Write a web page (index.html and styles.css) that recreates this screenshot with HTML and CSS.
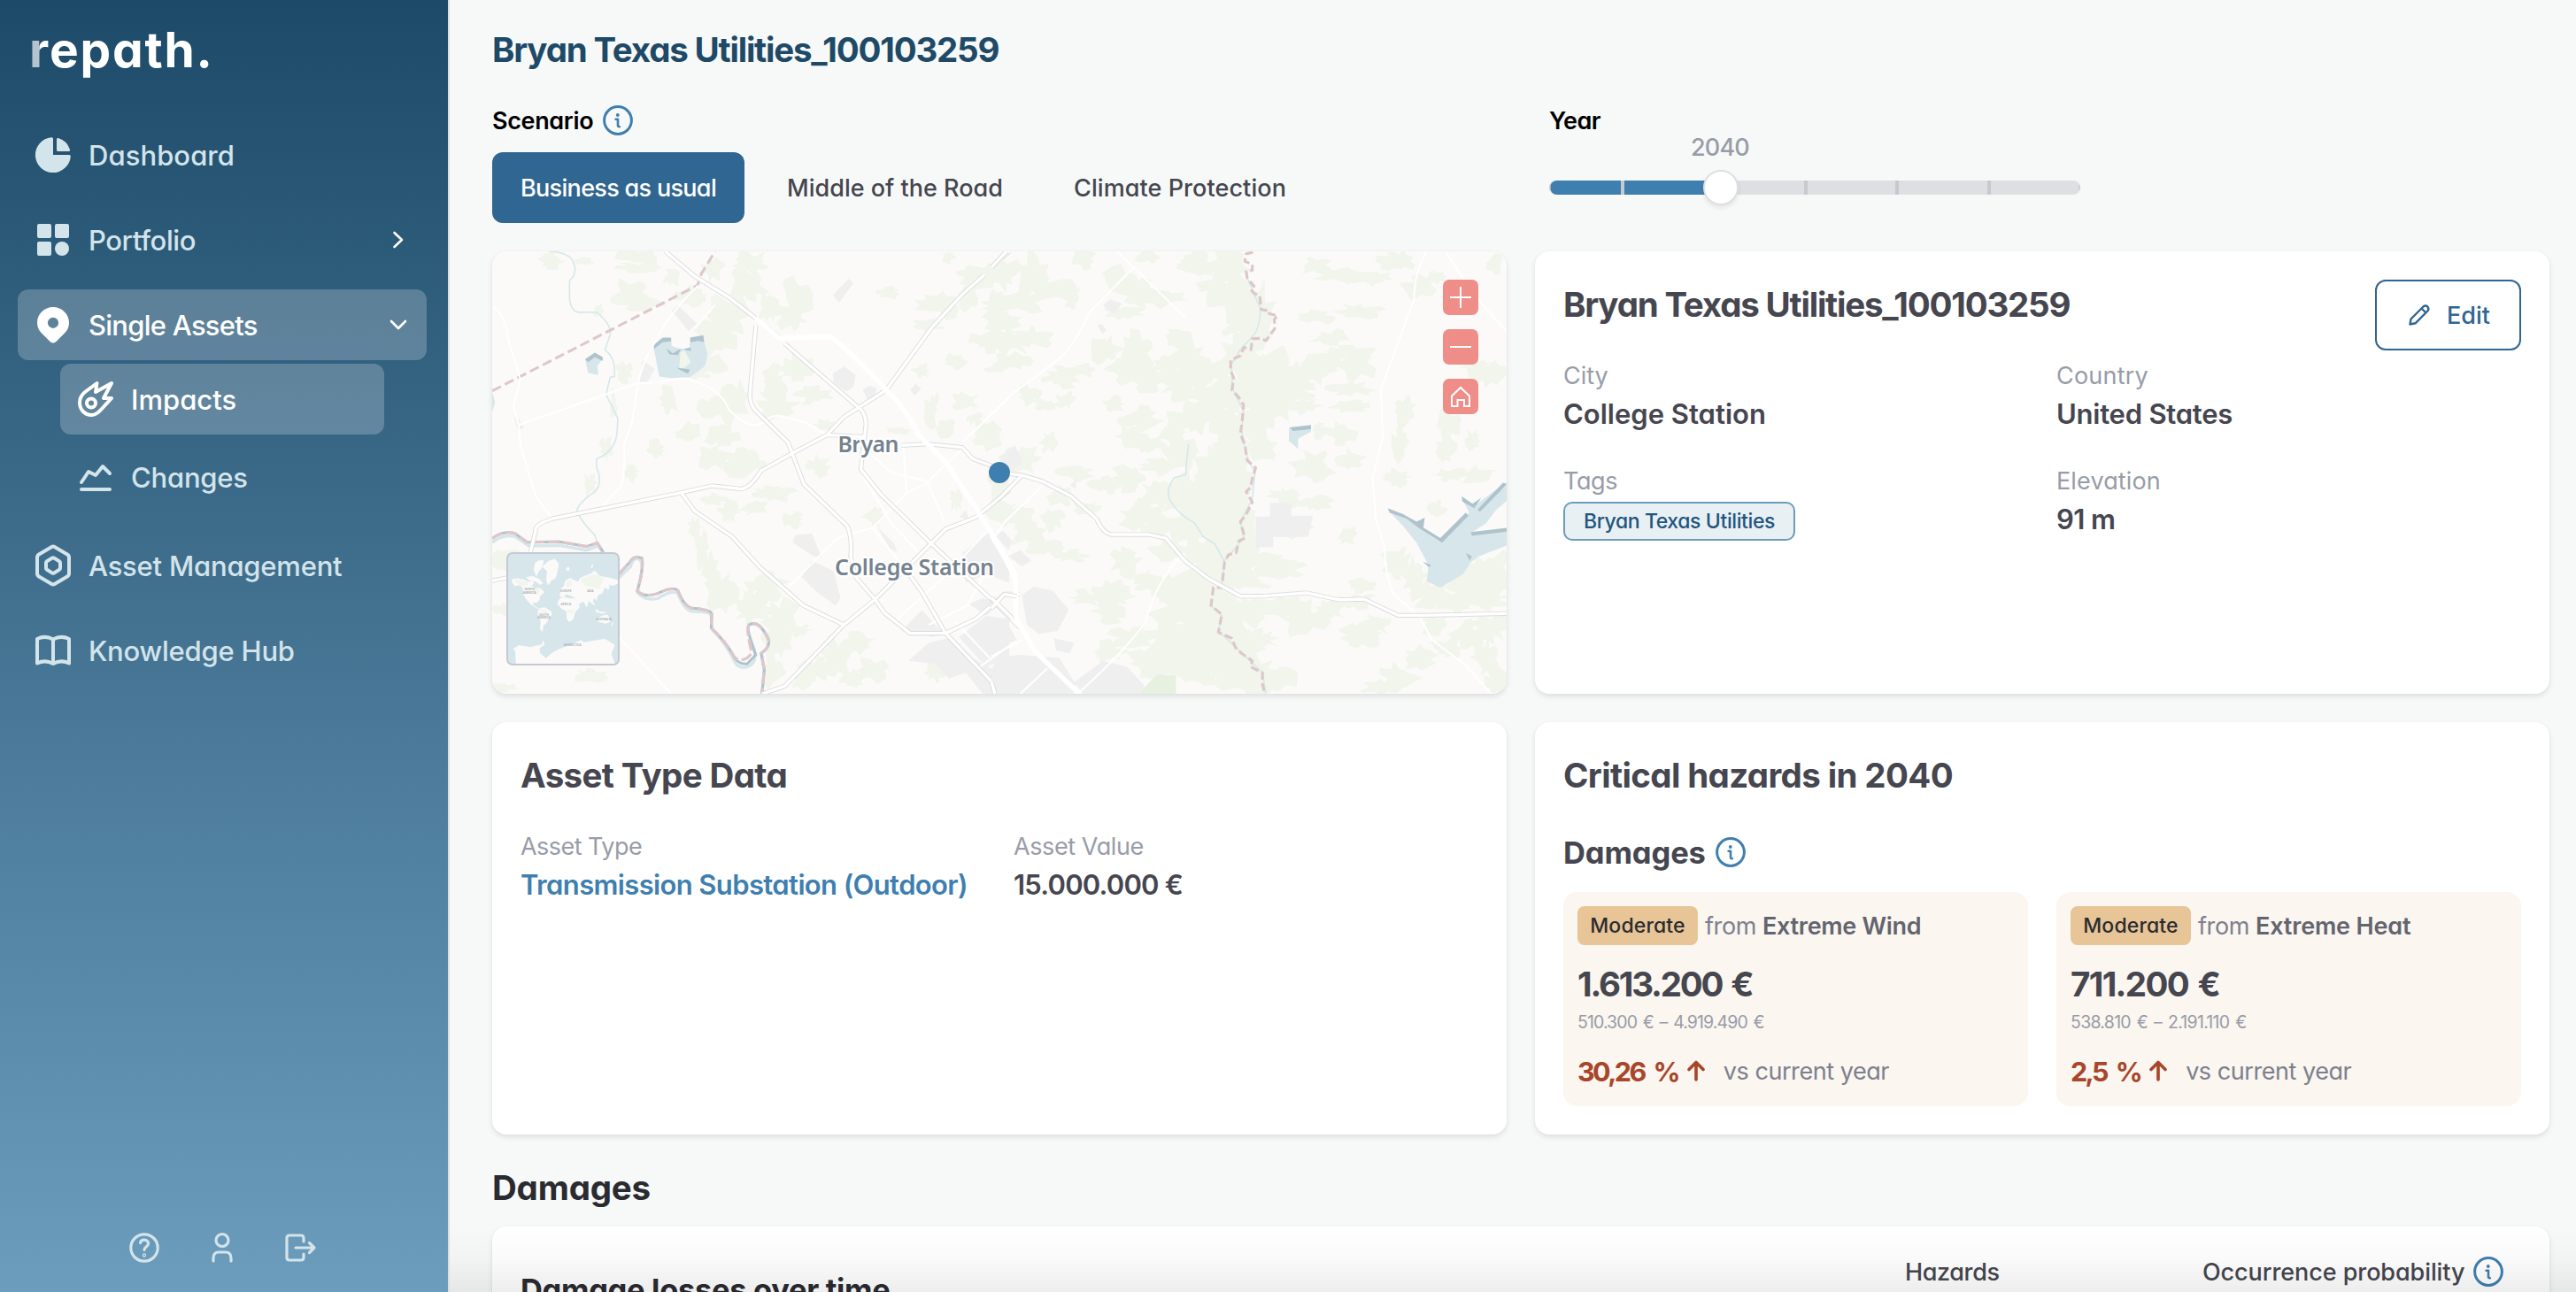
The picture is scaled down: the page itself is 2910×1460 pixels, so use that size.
FILE: index.html
```html
<!DOCTYPE html>
<html lang="en">
<head>
<meta charset="utf-8">
<title>repath.</title>
<link rel="stylesheet" href="styles.css">
</head>
<body>
<svg class="defs" width="0" height="0">
  <symbol id="info" viewBox="0 0 34 34"><circle cx="17" cy="17" r="15.4" fill="none" stroke="currentColor" stroke-width="3"/><circle cx="16.8" cy="11" r="1.9" fill="currentColor"/><path d="M14.6 15.8h2.4v7q0 1.4 1.8 1.4" fill="none" stroke="currentColor" stroke-width="2.6" stroke-linecap="round" stroke-linejoin="round"/></symbol>
  <symbol id="up" viewBox="0 0 22 24"><path d="M11 22V3M3 10.5L11 2.5L19 10.5" fill="none" stroke="currentColor" stroke-width="3.6" stroke-linecap="round" stroke-linejoin="round"/></symbol>
</svg>
<div class="app">
  <aside class="sidebar">
    <div class="logo"><span class="logo-r">r</span>epath.</div>
    <nav class="nav">
      <a class="item"><svg class="ic" viewBox="0 0 40 40"><path fill="currentColor" d="M18 .2Q20 0 20 2V20H38Q40 20 39.8 22A20 20 0 1 1 18 .2Z"/><path fill="currentColor" d="M24 2.5Q24 .6 25.8 1A20 20 0 0 1 39 14Q39.6 16 37.8 16H25.5Q24 16 24 14.5Z"/></svg><span class="label dashboard">Dashboard</span></a>
      <a class="item"><svg class="ic" viewBox="0 0 40 40" fill="currentColor"><rect x="2" y="2" width="16" height="16" rx="2"/><rect x="22" y="2" width="16" height="16" rx="2"/><rect x="2" y="22" width="16" height="16" rx="2"/><circle cx="30" cy="30" r="8"/></svg><span class="label portfolio">Portfolio</span><svg class="chev" viewBox="0 0 20 20"><path d="M5.500 2L14 10L5.500 18"/></svg></a>
      <a class="item active"><svg class="ic" viewBox="0 0 40 40"><path fill="currentColor" fill-rule="evenodd" d="M20 0C30 0 38 8 38 17.500C38 23 35.800 27 32.500 30L23.200 39.200Q20 42 16.800 39.200L7.500 30C4.200 27 2 23 2 17.500C2 8 10 0 20 0ZM20 11.700A6.100 6.100 0 1 0 20 23.900A6.100 6.100 0 1 0 20 11.700Z"/></svg><span class="label single">Single Assets</span><svg class="chev" viewBox="0 0 20 20"><path d="M2 6L10 14L18 6"/></svg></a>
      <a class="item active impacts-row"><svg class="ic" viewBox="0 0 40 40"><path class="ln" d="M2 24C2 18 5 14.500 8 12L21.500 2L20 12L38 2L29 19H38L26 32C22.500 36 19.500 38 15.500 38C8 38 2 32 2 24Z"/><circle class="ln" cx="15" cy="24.500" r="5"/></svg><span class="label impacts">Impacts</span></a>
      <a class="item changes-row"><svg class="ic" viewBox="0 0 40 40"><path class="ln" d="M4 26L12 14L20 18L28 8L36 16M4 34H36"/></svg><span class="label changes">Changes</span></a>
      <a class="item assets-row"><svg class="ic" viewBox="0 0 40 40"><path class="ln" d="M18 -.8Q20 -2 22 -.8L36 7.500Q38 8.700 38 11V29Q38 31.300 36 32.500L22 40.800Q20 42 18 40.800L4 32.500Q2 31.300 2 29V11Q2 8.700 4 7.500Z"/><path class="ln" d="M19 11.500Q20 10.900 21 11.500L27 15.200Q28 15.800 28 17V23Q28 24.200 27 24.800L21 28.500Q20 29.100 19 28.500L13 24.800Q12 24.200 12 23V17Q12 15.800 13 15.200Z"/></svg><span class="label assets">Asset Management</span></a>
      <a class="item"><svg class="ic" viewBox="0 0 40 40"><path class="ln" d="M20 7.500V35M20 7.500Q11 2.500 2 7V34.500Q11 30 20 35Q29 30 38 34.500V7Q29 2.500 20 7.500Z"/></svg><span class="label knowledge">Knowledge Hub</span></a>
    </nav>
    <div class="foot">
      <svg width="36" height="36" viewBox="0 0 36 36"><circle cx="18" cy="18" r="15.200"/><path d="M13.500 12.500C14 9.800 16 9 18.200 9.200C21 9.400 22.800 11.200 22.500 13.800C22 16.800 18.200 16.800 18 20.500"/><circle cx="18" cy="26.500" r=".6"/></svg>
      <svg width="36" height="36" viewBox="0 0 36 36"><circle cx="18" cy="9.500" r="7"/><path d="M8 33V30Q8 23 14 23H22Q28 23 28 30V33"/></svg>
      <svg width="36" height="36" viewBox="0 0 36 36"><path d="M22 11V7Q22 4 19 4H6Q3 4 3 7V29Q3 32 6 32H19Q22 32 22 29V25M13 18H34M28.500 12.500L34 18L28.500 23.500"/></svg>
    </div>
  </aside>

  <main class="main">
    <h1 class="title">Bryan Texas Utilities_100103259</h1>
    <section class="controls">
      <div class="scenario">
        <div class="ctl-label"><span class="scn">Scenario</span><svg class="info"><use href="#info"/></svg></div>
        <div class="tabs"><button class="tab on">Business as usual</button><button class="tab mid">Middle of the Road</button><button class="tab clim">Climate Protection</button></div>
      </div>
      <div class="year">
        <div class="ctl-label yr">Year</div>
        <div class="track"><div class="fill"></div><i></i><i></i><i></i><i></i><i></i><i></i><i></i><div class="thumb"></div><div class="val">2040</div></div>
      </div>
    </section>

    <section class="cards">
      <div class="card map">
        <svg class="mapsvg" viewBox="0 0 1146 500">
          <g transform="translate(-16 -14) scale(.3827 .3381)">
            <g id="woods-west" class="wood"></g>
            <path class="urban" d="M572 240L590 222L645 282L622 308ZM1047 188L1094 133L1108 148L1066 213ZM1047 452L1080 425L1115 455L1108 495L1085 510L1050 480ZM1135 505L1155 490L1178 500L1172 522L1150 538ZM1275 505L1292 484L1308 500L1290 524ZM485 405L522 435L500 478L474 482ZM106 595L120 600L136 630L118 640ZM1180 965L1230 1020L1236 1047L1215 1035ZM935 990L985 985L1015 1065L990 1060L930 1015ZM955 1130L985 1075L1050 1110L1070 1200L1055 1225L1000 1180ZM1250 1310L1310 1240L1350 1290L1380 1320L1340 1330ZM1270 1410L1330 1350L1400 1330L1460 1400L1520 1440L1568 1480V1521H1490L1440 1450L1390 1470L1350 1420ZM1420 1330L1500 1260L1568 1270V1400L1500 1430ZM1450 1220L1490 1200L1540 1220L1500 1260ZM1430 1050L1510 980L1540 1020L1568 1080V1150L1500 1120L1440 1150ZM1420 930L1440 905L1450 940Z"/>
            <path class="water" d="M518 360L535 340L570 335L572 358L600 368L625 362V335L662 325L678 385L670 425L625 462L575 466L535 460ZM316 402L345 380L368 400L352 425L355 455L325 448ZM42 512L50 545L42 578Z"/>
            <path class="deep" d="M518 355L545 330H570V342L545 345L520 367ZM556 366L575 382L600 366L590 388L565 386ZM626 330L665 322L668 345L650 340L628 345ZM606 370L628 362V375ZM316 402L345 380L368 395V408L345 395L325 412ZM586 430L625 436L620 450L600 440Z"/>
            <path class="wood" d="M597 380L610 372L622 400L628 412L610 430L594 432Z"/>
            <path class="stream" d="M210 41Q260 45 275 65Q300 110 270 140V200Q275 245 300 245H350Q395 285 390 320L375 370Q405 400 403 440V460L390 462L378 520L413 600L410 650Q405 710 350 735V765Q370 815 345 845Q300 880 292 905Q300 940 345 990L352 1015"/>
            <path class="river" d="M42 1014Q75 985 110 995L150 1026L240 1024L320 1040L355 1026L375 1060M416 1132L450 1095Q462 1055 480 1075Q490 1100 470 1180Q490 1210 530 1202Q575 1170 590 1185Q612 1250 640 1245Q690 1245 688 1262L692 1306Q730 1350 752 1400Q765 1440 795 1430Q825 1420 815 1370Q790 1300 800 1290Q830 1270 858 1340Q862 1365 836 1385L845 1440L838 1521"/>
            <path class="shade" d="M42 1001Q75 972 110 985L145 1014L240 1012L320 1028L352 1016L370 1047M416 1120L448 1080Q462 1055 484 1067Q490 1100 470 1176Q490 1200 530 1185Q575 1160 590 1175Q612 1238 640 1235Q690 1240 690 1255L688 1300Q730 1345 750 1385Q765 1425 795 1420L820 1390Q790 1300 800 1290Q830 1270 858 1340Q862 1365 836 1385L845 1440L838 1521"/>
            <path class="bound2" d="M42 1001Q75 972 110 985L145 1014L240 1012L320 1028L352 1016L370 1047M416 1120L448 1080Q462 1055 484 1067Q490 1100 470 1176Q490 1200 530 1185Q575 1160 590 1175Q612 1238 640 1235Q690 1240 690 1255L688 1300Q730 1345 750 1385Q765 1420 795 1400L808 1385Q790 1300 800 1290Q830 1270 858 1340Q862 1365 836 1385L845 1440L838 1521"/>
            <path class="bound" d="M42 508L648 155L660 115L700 41"/>
            <path class="minor" d="M42 225Q80 245 90 340L125 470L105 560L120 622L125 690L170 860L215 930M120 622L470 482L540 480Q600 455 640 475Q720 505 740 570Q800 640 840 615Q870 580 900 595L970 615L1030 655M650 155Q560 255 520 350Q480 420 470 500L455 610L430 690Q435 800 420 830L365 895M700 220L640 300M1130 780L1220 950L1310 1060M1145 705L1220 780L1325 810L1375 940M1420 690L1568 530M1255 690L1265 850L1325 815L1440 690M1265 850L1165 965L1060 1000L920 1160M1165 965L1275 1125M1230 1280L1380 1125L1500 980M416 1330L570 1521M1330 1290L1445 1225L1500 1110M1410 1280L1510 1400M1475 1435L1568 1360"/>
            <path class="casing" d="M552 41L640 125L740 195L820 265L895 335M820 290L803 510Q800 550 820 575L915 680L935 740L962 820L1090 960Q1105 1000 1100 1060L1115 1130L1172 1205L1200 1250L1275 1318H1380L1470 1270L1555 1187H1600M1568 41L1480 135L1430 185L1340 295L1205 505L1080 595L1030 655L930 715L835 775Q800 840 770 835L690 825L600 848L220 935Q165 955 170 975L155 1047M600 848L640 910L750 995L830 1095L960 1225L1080 1290L1172 1205L1380 970L1470 930L1568 840M905 350L1130 570Q1145 590 1145 620L1130 770L1190 855L1330 1010L1525 1215L1600 1300M1030 655L1145 662M1250 690L1325 685L1430 697L1460 735L1568 780M1080 1290L905 1495L838 1521M1275 1125L1310 1180L1380 1318L1525 1490L1530 1521M42 1142L84 1133"/>
            <path class="road" d="M552 41L640 125L740 195L820 265L895 335M820 290L803 510Q800 550 820 575L915 680L935 740L962 820L1090 960Q1105 1000 1100 1060L1115 1130L1172 1205L1200 1250L1275 1318H1380L1470 1270L1555 1187H1600M1568 41L1480 135L1430 185L1340 295L1205 505L1080 595L1030 655L930 715L835 775Q800 840 770 835L690 825L600 848L220 935Q165 955 170 975L155 1047M600 848L640 910L750 995L830 1095L960 1225L1080 1290L1172 1205L1380 970L1470 930L1568 840M905 350L1130 570Q1145 590 1145 620L1130 770L1190 855L1330 1010L1525 1215L1600 1300M1030 655L1145 662M1250 690L1325 685L1430 697L1460 735L1568 780M1080 1290L905 1495L838 1521M1275 1125L1310 1180L1380 1318L1525 1490L1530 1521M42 1142L84 1133"/>
            <path class="highway" d="M820 265L890 332L1040 326Q1090 365 1205 505Q1260 560 1300 655L1380 745L1470 900L1530 1010L1590 1130"/>
          </g>
          <g transform="translate(564 -14) scale(.3827 .3381)">
            <g id="woods-east" class="wood"></g>
            <path class="urban" d="M330 222L350 202L385 215L365 248L345 240ZM20 730L70 690L92 745L50 785ZM780 928H822V882H885V925H949L935 996H832V1030H780ZM90 1190L125 1162L180 1175L228 1240L195 1310L140 1320L105 1290ZM10 990L35 975L62 1010L50 1040ZM50 1060L85 1040L118 1075L90 1095ZM0 1260L50 1290L75 1340L20 1365L0 1360ZM20 1400L80 1390L200 1400L250 1490L240 1521H0V1440ZM185 1335L245 1350L230 1385L190 1375ZM245 1480L330 1410L400 1430L450 1490L445 1521H270ZM312 290L325 283L340 305L328 318ZM232 825L250 800V835Z"/>
            <path class="park" d="M450 1500L490 1455L545 1460V1521H440Z"/>
            <path class="water" d="M878 630L943 625V645L905 668V702L878 675ZM1170 905L1230 930L1262 965L1320 1010L1380 950L1410 915L1390 870L1420 890L1440 880L1510 820H1521V875L1490 905L1460 950L1420 980L1521 972V1025L1440 1060L1415 1080L1392 1120L1325 1165L1285 1145L1290 1090L1255 1015L1215 960Z"/>
            <path class="deep" d="M881 630L943 622V636L890 642ZM1170 900L1215 920L1255 945L1279 932L1275 965L1290 975L1325 1000L1400 915L1408 925L1330 1015L1260 965L1225 935L1175 915ZM1388 860L1420 885L1446 865L1425 900L1390 878ZM1435 905L1510 815L1521 818L1500 845L1442 912ZM1415 980L1521 966V978L1418 992ZM1273 1078L1297 1090L1292 1098ZM1400 1050L1418 1060L1412 1075Z"/>
            <path class="stream" d="M582 685Q575 740 574 788L540 798Q515 835 525 870Q550 920 600 950L625 995L660 1020L688 1080M755 130L795 235Q790 300 775 320L735 370L708 420L712 500L745 580L738 640L755 730L778 780L770 870L735 945L745 1000L688 1075L680 1170M648 1225L680 1260L670 1310L740 1385L800 1450L810 1521"/>
            <path class="bound3" d="M772 44L752 50L748 75L770 85V105L752 108L755 132L775 158L765 168L775 182L792 190L796 236L820 240V250L845 257L835 268L836 300L810 340L795 332L770 334L766 370L745 362L735 390L706 405V440L715 465L710 505L730 530L744 555L740 610L735 650L748 690L755 740L780 765L770 800L765 830L752 845L770 880L752 920L735 945L748 1000L730 1010L722 1050L700 1055L688 1080L680 1165H655L648 1225L680 1255L670 1315L710 1335L720 1365L738 1385L770 1410L765 1430L800 1450V1490L808 1521"/>
            <path class="minor" d="M370 41L575 265M420 95L290 245Q245 355 200 400Q155 440 60 518L-15 600M1285 41Q1245 120 1248 200Q1200 350 1150 500L1155 660L1125 800L1135 940L1160 1030Q1165 1150 1190 1190L1265 1265L1300 1340L1400 1425L1475 1521M1340 41Q1395 140 1450 220L1521 310M150 825L40 945L5 1005M555 1065Q485 1150 455 1280Q400 1370 260 1515M85 1521L165 1435M0 1395L90 1340"/>
            <path class="highway" d="M0 990Q70 1120 72 1150V1265L130 1380L260 1521"/>
            <path class="casing" d="M0 95L45 41M20 780L90 790L150 810L235 860L310 935Q330 985 355 988H465L515 1000L570 1075L640 1135L735 1194H800L930 1183L1025 1206L1100 1204L1200 1258H1280L1521 1252M90 790L30 860L0 888M0 1235L38 1187L75 1195M0 1200L62 1268M0 1480L10 1521"/>
            <path class="road" d="M0 95L45 41M20 780L90 790L150 810L235 860L310 935Q330 985 355 988H465L515 1000L570 1075L640 1135L735 1194H800L930 1183L1025 1206L1100 1204L1200 1258H1280L1521 1252M90 790L30 860L0 888M0 1235L38 1187L75 1195M0 1200L62 1268M0 1480L10 1521"/>
          </g>
          <text class="town" x="390.500" y="227" textLength="69">Bryan</text>
          <text class="town" x="387" y="366" textLength="180">College Station</text>
          <circle cx="573" cy="250" r="12" fill="#3f7fb0"/>
        </svg>
        <div class="mapbtns">
          <button><svg viewBox="0 0 40 40"><path d="M8 20H32M20 8V32"/></svg></button>
          <button><svg viewBox="0 0 40 40"><path d="M8 20H32"/></svg></button>
          <button><svg viewBox="0 0 40 40"><path d="M10 31V19.500L20 10L30 19.500V31H24V24H16.500V31Z"/></svg></button>
        </div>
        <svg class="inset" viewBox="43 43 370 370">
          <path class="land" d="M57 128L75 126L95 130L112 138L125 135L130 142L120 150L135 160L150 158L165 172L150 185L148 198L138 208L128 204L126 212L136 222L146 228L135 222L122 214L108 200L95 180L94 160L85 148L65 150L58 140ZM130 95L135 72L150 64L163 66L156 90L145 102L138 118ZM105 122L125 118L148 128L160 142L150 146L138 136L112 130ZM160 85L178 68L200 60L213 75L208 105L202 125L188 132L178 148L172 130L175 100L165 92ZM150 226L168 224L188 238L190 246L178 262L172 275L162 284L158 304L151 296L154 270L143 246L145 234ZM216 196L230 188L250 194L268 194L278 212L284 222L268 240L262 262L250 272L242 262L240 236L220 224L210 210ZM218 182L222 160L232 150L236 134L252 124L262 130L280 138L285 125L300 118L318 112L335 100L352 118L385 124L413 132V142L395 150L385 145L382 162L368 155L360 175L345 182L340 200L333 190L328 202L335 216L322 208L314 200L308 222L298 204L290 205L280 215L272 195L262 186L250 182L240 178L230 186L220 188ZM338 228L352 238L372 240L360 244L340 238ZM342 262L360 252L378 248L388 270L372 277L345 270ZM392 280L396 274L394 286ZM240 92L246 86L250 96L242 100ZM322 84L330 78L326 90Z"/>
          <path class="land" d="M70 413L68 372L62 362L80 352L120 358L140 352L155 350L162 336L164 350L148 360L150 378L170 395L190 378L215 364L250 352L290 334L298 342L330 336L370 330L385 340L402 350L390 380L402 413Z"/>
          <path class="green" d="M62 128L112 138L108 150L80 150ZM285 128L335 110L365 125L350 160L300 150ZM236 140L255 130L258 150L240 158ZM148 228L178 236L170 244L150 236ZM242 230L268 232L260 244L244 240ZM120 158L150 160L145 180L125 172Z"/>
          <g class="conts"><text x="115" y="164">NORTH</text><text x="115" y="176">AMERICA</text><text x="238" y="171">EUROPE</text><text x="320" y="171">ASIA</text><text x="238" y="216">AFRICA</text><text x="164" y="251">SOUTH</text><text x="164" y="262">AMERICA</text><text x="366" y="266">AUSTRALIA</text><text x="260" y="353">ANTARCTICA</text></g>
        </svg>
      </div>

      <div class="card detail">
        <div class="head"><h2 class="c1">Bryan Texas Utilities_100103259</h2><button class="edit"><svg width="26" height="26" viewBox="0 0 26 26"><path d="M2.500 23.500L3.500 17.500L17.500 3.500Q20 1.500 22.300 3.500Q24.500 6 22.300 8.500L8.500 22.300ZM15.500 5.500L20.500 10.500"/></svg><span>Edit</span></button></div>
        <div class="fields">
          <div><div class="k">City</div><div class="v">College Station</div></div>
          <div><div class="k k-country">Country</div><div class="v c2">United States</div></div>
          <div><div class="k c4">Tags</div><div class="tag">Bryan Texas Utilities</div></div>
          <div><div class="k k-elev">Elevation</div><div class="v c3">91 m</div></div>
        </div>
      </div>

      <div class="card asset">
        <h2 class="c5">Asset Type Data</h2>
        <div class="fields">
          <div><div class="k c6">Asset Type</div><div class="v link">Transmission Substation (Outdoor)</div></div>
          <div><div class="k c4">Asset Value</div><div class="v c7">15.000.000 €</div></div>
        </div>
      </div>

      <div class="card hazards">
        <h2 class="c5">Critical hazards in 2040</h2>
        <div class="sub-h"><h3>Damages</h3><svg class="info"><use href="#info"/></svg></div>
        <div class="boxes">
          <div class="box">
            <div class="from"><span class="badge">Moderate</span><span class="fr">from</span><b>Extreme Wind</b></div>
            <div class="amount">1.613.200 €</div>
            <div class="range">510.300 € – 4.919.490 €</div>
            <div class="delta"><b>30,26 %</b><svg class="up"><use href="#up"/></svg><span>vs current year</span></div>
          </div>
          <div class="box">
            <div class="from"><span class="badge">Moderate</span><span class="fr">from</span><b class="heat">Extreme Heat</b></div>
            <div class="amount amount2">711.200 €</div>
            <div class="range range2">538.810 € – 2.191.110 €</div>
            <div class="delta"><b>2,5 %</b><svg class="up"><use href="#up"/></svg><span>vs current year</span></div>
          </div>
        </div>
      </div>
    </section>

    <h2 class="section">Damages</h2>
    <section class="card losses">
      <h3 class="loss-title">Damage losses over time</h3>
      <div class="opt haz">Hazards</div>
      <div class="opt occ"><span>Occurrence probability</span><svg class="info"><use href="#info"/></svg></div>
    </section>
    <div class="fade"></div>
  </main>
</div>
<script src="map.js"></script>
</body>
</html>
```
FILE: styles.css
```css
*{box-sizing:border-box}
body{margin:0;font-family:Inter,"Noto Sans",sans-serif;font-feature-settings:"cv11";color:#45464f;background:#f7f9f8;white-space:nowrap}
h1,h2,h3{margin:0;font-weight:700}
button{font:inherit;font-feature-settings:inherit;color:inherit;border:0;padding:0;background:none;white-space:nowrap}
svg{display:block;flex:none;overflow:visible}
.defs{position:absolute}
.app{display:flex;height:1460px;overflow:hidden}

.sidebar{width:508px;flex:none;display:flex;flex-direction:column;border-right:2px solid #dddee3;background:linear-gradient(#1d4a69,#6c9dbd);color:#d3e4ea}
.logo{padding:28px 0 0 33px;height:135px;font-size:55px;line-height:56px;font-weight:700;letter-spacing:.033em;color:#fff}
.logo-r{background:linear-gradient(90deg,#b4c4ce 12px,#fff 12px);background-clip:text;-webkit-background-clip:text;color:transparent}
.nav{display:flex;flex-direction:column;gap:16px;padding:0 24px 0 20px}
.item{display:flex;align-items:center;height:80px;padding:0 20px;border-radius:12px;font-size:31px;font-weight:500}
.item.active{background:rgba(255,255,255,.22);color:#fff}
.item.impacts-row{margin:-12px 48px 0}
.item.changes-row{margin:-8px 48px 0}
.assets-row{margin-top:4px}
.ic{width:40px;height:40px}
.ln{fill:none;stroke:currentColor;stroke-width:4;stroke-linejoin:round;stroke-linecap:round}
.label{margin-left:20px;flex:1}
.dashboard{letter-spacing:.002em}.portfolio{letter-spacing:-.013em}.single{letter-spacing:-.024em}
.changes,.assets,.knowledge{letter-spacing:-.007em}
.chev{width:20px;height:20px;margin-right:2px}
.chev path{fill:none;stroke:#fff;stroke-width:2.6;stroke-linecap:round;stroke-linejoin:round}
.foot{display:flex;gap:52px;margin:auto 0 32px 145px}
.foot svg{fill:none;stroke:currentColor;stroke-width:3.2;stroke-linecap:round;stroke-linejoin:round}

.main{position:relative;flex:1;padding:32px 30px 0 48px}
.title{font-size:38.5px;line-height:48px;letter-spacing:-.0312em;color:#1e4a68}
.controls{display:grid;grid-template-columns:1178px 1fr;margin:38px 0 32px}
.ctl-label{display:flex;align-items:center;gap:11px;height:36px;font-size:27px;font-weight:600;color:#000}
.scn{letter-spacing:-.013em}
.info{width:34px;height:34px;color:#3f7fb0}
.tabs{display:flex;margin-top:18px;gap:16px}
.tab{height:80px;padding:0 32px;font-size:27px;font-weight:500;border-radius:12px}
.tab.on{width:285px;background:#2f6692;color:#fff;letter-spacing:-.0254em}
.tab.mid{width:308px}.tab.clim{width:304px;letter-spacing:.003em}
.year{padding-left:16px}
.yr{letter-spacing:-.02em}
.track{position:relative;display:flex;justify-content:space-between;width:600px;height:16px;margin-top:50px;border-radius:8px;background:#dedfe3}
.track i{position:relative;width:4px;background:#c8c9ce}
.track i:nth-of-type(1),.track i:nth-of-type(7){width:2px;margin-block:5px;opacity:.6}
.track i:nth-of-type(2){margin-left:-20px}
.fill{position:absolute;left:1px;top:0;width:194px;height:16px;border-radius:8px 0 0 8px;background:#3f7fb0}
.thumb{position:absolute;left:174px;top:-12px;width:40px;height:40px;border-radius:50%;border:2px solid #dedfe3;background:#fff;box-shadow:0 3px 5px rgba(0,0,0,.08)}
.val{position:absolute;left:159px;top:-51px;width:68px;text-align:center;font-size:27px;line-height:28px;font-weight:500;letter-spacing:-.03em;color:#989ca8}

.cards{display:grid;grid-template-columns:1146px 1146px;grid-template-rows:500px 466px;gap:32px}
.card{background:#fff;border-radius:16px;padding:32px;box-shadow:0 3px 6px rgba(0,0,0,.1),0 0 2px rgba(0,0,0,.04)}
.card h2{font-size:38.5px;line-height:56px;color:#45464f}
.card .c1{letter-spacing:-.0312em}.c2{letter-spacing:-.0075em}.c3{letter-spacing:-.02em}.c4{letter-spacing:-.015em}
.card .c5{letter-spacing:-.0163em}.c6{letter-spacing:-.02em}.c7{letter-spacing:-.0257em}
.k-country{letter-spacing:.008em}.k-elev{letter-spacing:.005em}
.head{display:flex;justify-content:space-between;height:80px}
.edit{display:flex;align-items:center;gap:18px;width:165px;padding-left:35px;border:2px solid #2f6692;border-radius:12px;color:#2f6692;font-size:27px;font-weight:500}
.edit svg{fill:none;stroke:currentColor;stroke-width:2.4;stroke-linejoin:round}
.fields{display:grid;grid-template-columns:1fr 1fr;column-gap:32px;row-gap:37px;margin-top:11px}
.asset .fields{margin-top:35px}
.k{font-size:27px;line-height:36px;color:#989ca8}
.v{margin-top:5px;font-size:31px;line-height:40px;font-weight:600;color:#45464f}
.detail .v{margin-bottom:1px}
.link{color:#3f7fb0;letter-spacing:-.0203em}
.tag{width:262px;height:44px;margin-top:5px;border:2px solid #6b9cba;border-radius:10px;background:#e8f0f3;color:#1f5580;font-size:23px;line-height:40px;font-weight:500;letter-spacing:-.0174em;text-align:center}

.sub-h{display:flex;align-items:center;gap:11px;height:44px;margin:37px 0 23px}
.sub-h h3{font-size:34.5px;letter-spacing:-.003em;color:#45464f}
.boxes{display:grid;grid-template-columns:525px 525px;gap:32px}
.box{height:242px;padding:16px;border-radius:16px;background:#fbf6ef}
.from{display:flex;align-items:center;height:44px;font-size:27px;color:#7c808e}
.badge{width:136px;margin-right:8px;border-radius:8px;background:#e8c596;color:#2a2b31;font-size:23px;line-height:44px;font-weight:500;text-align:center;letter-spacing:.006em}
.fr{letter-spacing:-.0145em;margin-right:7px}
.from b{font-weight:600;color:#62656f;letter-spacing:-.0107em}
.from .heat{letter-spacing:-.006em}
.amount{margin-top:20px;font-size:38.5px;line-height:48px;font-weight:700;letter-spacing:-.057em;word-spacing:.08em}
.amount2{letter-spacing:-.043em}
.range{margin-top:5px;font-size:19.5px;line-height:28px;letter-spacing:-.046em;word-spacing:.11em;color:#989ca8}
.range2{letter-spacing:-.037em}
.delta{display:flex;align-items:center;height:40px;margin-top:21px;font-size:27px;color:#7c808e}
.delta b{font-size:30.5px;color:#a8452a;letter-spacing:-.085em;word-spacing:.17em}
.delta span{letter-spacing:-.0166em}
.up{width:22px;height:24px;margin:0 20px 0 9px;color:#a8452a}

.section{margin:36px 0 20px;font-size:38.5px;line-height:48px;letter-spacing:-.005em;color:#2a2b31}
.losses{display:flex;align-items:flex-start;height:600px}
.losses h3{width:1564px;margin-top:16px;font-size:34.5px;line-height:48px;letter-spacing:-.0095em;color:#2a2b31}
.opt{display:flex;align-items:center;height:38px;font-size:27px;font-weight:500}
.haz{width:336px;letter-spacing:-.0142em}
.occ{gap:10px;letter-spacing:-.003em}
.fade{position:absolute;left:0;right:0;top:1385px;height:75px;background:linear-gradient(rgba(0,0,0,0),rgba(0,0,0,.02) 50%,rgba(0,0,0,.07))}

.map{position:relative;padding:0;overflow:hidden;background:#fbfaf9}
.mapsvg{width:1146px;height:500px;overflow:hidden}
.mapsvg path{fill:none;vector-effect:non-scaling-stroke}
.mapsvg .wood,.mapsvg .wood path{fill:#f1f5ec}
.mapsvg .urban{fill:#efeff0}
.mapsvg .park{fill:#e7f1e0}
.mapsvg .water{fill:#d6e6ea}
.mapsvg .deep{fill:#afc3cd}
.stream{stroke:#d6e8ea;stroke-width:1.6}
.river{stroke:#d6e6ea;stroke-width:3.5}
.shade{stroke:#afc3cd;stroke-width:3}
.bound{stroke:#dec7ca;stroke-width:3;stroke-dasharray:11 5}
.bound2{stroke:#dec7ca;stroke-width:3.2;stroke-dasharray:13 4}
.bound3{stroke:#dec7ca;stroke-width:3.2;stroke-dasharray:9 4;stroke-linejoin:round}
.minor{stroke:#fff;stroke-width:2}
.casing{stroke:#dcdcdc;stroke-width:5.2;stroke-linejoin:round}
.road{stroke:#fff;stroke-width:3.4;stroke-linejoin:round}
.highway{stroke:#fff;stroke-width:5.5;stroke-linejoin:round}
.town{font:600 25px "Noto Sans",sans-serif;fill:#75828f;stroke:#fff;stroke-width:4px;paint-order:stroke;stroke-linejoin:round}
.mapbtns{position:absolute;right:32px;top:32px;display:flex;flex-direction:column;gap:16px}
.mapbtns button{width:40px;height:40px;border-radius:7px;background:#ef8d89}
.mapbtns svg{width:40px;height:40px;fill:none;stroke:#fff;stroke-width:2}
.inset{position:absolute;left:16px;top:340px;width:128px;height:128px;border:2px solid #c6c9d2;border-radius:7px;background:#d6e6ea;overflow:hidden}
.land{fill:#fbfaf9;stroke:#fbfaf9;stroke-width:2;stroke-linejoin:round}
.green{fill:#f1f5ec}
.conts{font:700 9.500px "Noto Sans",sans-serif;fill:#aeb2b8;text-anchor:middle}
```
FILE: map.js
```js
// Woodland patches: centre x, centre y, half width, half height.
const west = [
  [215,75,35,28],[310,75,30,14],[480,60,60,30],[470,95,60,15],[455,180,55,45],[480,215,70,22],[570,130,28,25],[630,190,45,30],
  [690,100,35,40],[805,80,55,35],[800,160,50,60],[730,270,70,75],[700,330,55,60],[690,420,60,30],[640,450,45,18],[860,230,30,50],[940,190,45,60],[930,260,45,45],
  [355,240,15,22],[430,440,22,35],[400,560,10,50],[560,540,30,45],[690,560,50,35],[760,540,50,70],[870,480,40,50],[880,560,60,50],[940,430,45,45],[990,520,50,30],
  [620,640,35,30],[720,660,45,45],[780,740,70,50],[690,730,35,40],[525,705,30,30],[380,700,20,35],[455,780,20,30],[330,820,20,35],[1005,760,32,32],
  [870,850,60,30],[740,910,32,32],[820,900,45,25],[700,870,35,18],[640,970,20,35],[660,1040,18,60],[930,940,30,25],[1020,620,35,20],
  [720,1180,45,60],[690,1120,25,60],[850,1160,60,45],[820,1240,60,40],[900,1260,55,50],[890,1340,45,60],[870,1440,35,50],[950,1310,35,20],[800,1220,30,60],
  [1000,1440,50,35],[1060,1400,45,60],[1120,1350,50,40],[1110,1470,40,30],[1170,1440,45,40],[960,1480,35,25],[1350,1440,35,40],
  [80,1070,40,40],[70,1240,30,20],[330,1460,45,22],[70,1500,40,18],[1170,930,28,30],[1370,220,70,40],[1210,180,35,20],[1330,290,50,20],[1480,130,80,35],
  [1530,220,45,50],[1500,340,50,35],[1450,200,30,50],[1310,440,25,30],[1405,410,32,22],[1390,60,20,20],[1340,570,20,55],[1380,630,35,30],[1440,540,40,30],[1500,660,45,45],[1460,600,30,20],
  [1540,830,30,60],[1410,870,20,40],[1530,910,30,25],[1240,640,30,14]
];
const east = [
  [30,120,45,50],[120,130,40,60],[180,170,60,35],[235,190,25,35],[270,60,35,35],[460,60,28,20],[90,210,65,30],[30,270,50,30],[50,340,60,40],[120,330,50,30],[60,410,45,25],[20,430,30,20],
  [380,140,55,40],[440,180,55,40],[500,200,60,25],[390,250,50,20],[600,70,50,30],[620,100,60,22],[700,100,55,60],[720,200,60,60],[740,280,50,50],[790,260,45,90],[650,160,55,20],
  [340,370,40,40],[430,380,40,60],[400,440,50,40],[470,470,45,40],[560,340,40,35],[580,400,45,40],[520,430,40,35],[640,440,60,40],[560,490,50,40],[650,530,70,50],[210,460,50,30],[270,440,35,20],[110,520,30,30],[160,555,35,16],[220,540,30,25],[360,550,30,25],
  [440,600,50,35],[410,660,35,35],[460,690,45,30],[540,640,40,50],[560,720,45,45],[600,600,60,50],[690,620,50,70],[700,700,50,70],[720,520,60,60],[650,760,45,60],[500,760,50,25],
  [740,400,70,70],[790,480,60,70],[720,800,55,80],[720,940,50,90],[710,1030,60,50],[690,1130,70,60],[660,1250,60,90],[690,1350,80,70],
  [830,440,60,70],[880,500,70,50],[900,460,60,40],[960,440,60,40],[1000,410,40,40],[1060,380,60,22],[1010,330,60,22],[960,260,45,20],[1080,430,50,35],[1060,500,60,22],[1060,560,55,20],[920,560,50,25],[850,560,40,40],[790,600,45,60],[800,700,40,40],
  [1020,120,65,25],[960,90,40,25],[1120,130,55,25],[1080,240,60,22],[1200,70,50,30],[1270,160,45,40],[1310,130,25,20],[1490,80,22,30],[1430,420,40,15],[1470,450,50,40],[1220,580,28,45],[1205,690,22,50],[1350,620,30,50],[1340,700,28,40],[1420,670,22,30],[1030,650,40,30],[970,640,22,25],[1060,740,35,35],[950,760,55,40],[1200,800,35,28],[1360,790,45,20],[1440,790,50,25],[1310,900,25,25],[960,880,40,25],[870,860,45,30],[900,960,45,35],
  [90,740,50,40],[170,680,22,35],[250,780,50,25],[200,860,35,30],[60,930,55,35],[110,980,45,50],[180,940,30,30],[280,900,35,20],[150,1030,50,30],[230,1060,45,18],[30,900,35,18],
  [340,820,45,25],[400,800,40,40],[490,850,50,40],[440,920,60,40],[560,860,50,70],[630,880,60,70],[690,900,50,100],[600,960,60,60],[500,960,50,35],[520,1040,60,30],[640,1060,60,60],[400,1080,40,50],[450,1140,40,35],
  [350,1190,60,40],[280,1200,40,25],[350,1250,50,30],[520,1170,45,50],[560,1240,70,60],[620,1180,60,70],[600,1320,80,70],[520,1330,60,60],[420,1330,60,30],[340,1380,50,30],[480,1420,80,50],[600,1430,80,70],[700,1440,70,70],[780,1460,70,60],[850,1470,45,50],[740,1380,50,60],
  [730,1090,50,30],[810,1080,70,25],[860,1110,60,30],[760,1150,50,22],[760,1240,50,45],[850,1230,60,35],[920,1270,55,50],[1000,1240,40,30],[790,1340,50,30],[1080,1210,45,22],[1090,1320,50,40],[1130,1290,40,30],[1050,990,28,28],
  [1200,1080,40,45],[1090,1160,35,20],[1250,1130,40,60],[1300,1190,50,40],[1420,1160,60,60],[1480,1130,50,80],[1460,1210,70,30],[1370,1210,50,35],[1310,1290,35,30],[1400,1320,50,40],[1470,1300,50,40],[1350,1370,45,30],[1260,1400,45,35],[1200,1460,50,35],[1150,1500,50,20],[1460,1400,35,50],[1490,1480,30,40]
];
let seed = 7;
const rnd = () => (seed = (seed * 16807) % 2147483647) / 2147483647;
function draw(id, list, spread) {
  const d = list.map(([x, y, rx, ry]) => {
    let p = '';
    const n = 19;
    for (let i = 0; i < n; i++) {
      const a = (i + rnd() * .8) / n * Math.PI * 2;
      const r = (.5 + rnd() * .8) * spread;
      p += (i ? 'L' : 'M') + (x + Math.cos(a) * rx * r).toFixed(0) + ' ' + (y + Math.sin(a) * ry * r).toFixed(0);
    }
    return p + 'Z';
  }).join('');
  const path = document.createElementNS('http://www.w3.org/2000/svg', 'path');
  path.setAttribute('d', d);
  document.getElementById(id).append(path);
}
draw('woods-west', west, 1.05);
draw('woods-east', east, 1.15);
```
